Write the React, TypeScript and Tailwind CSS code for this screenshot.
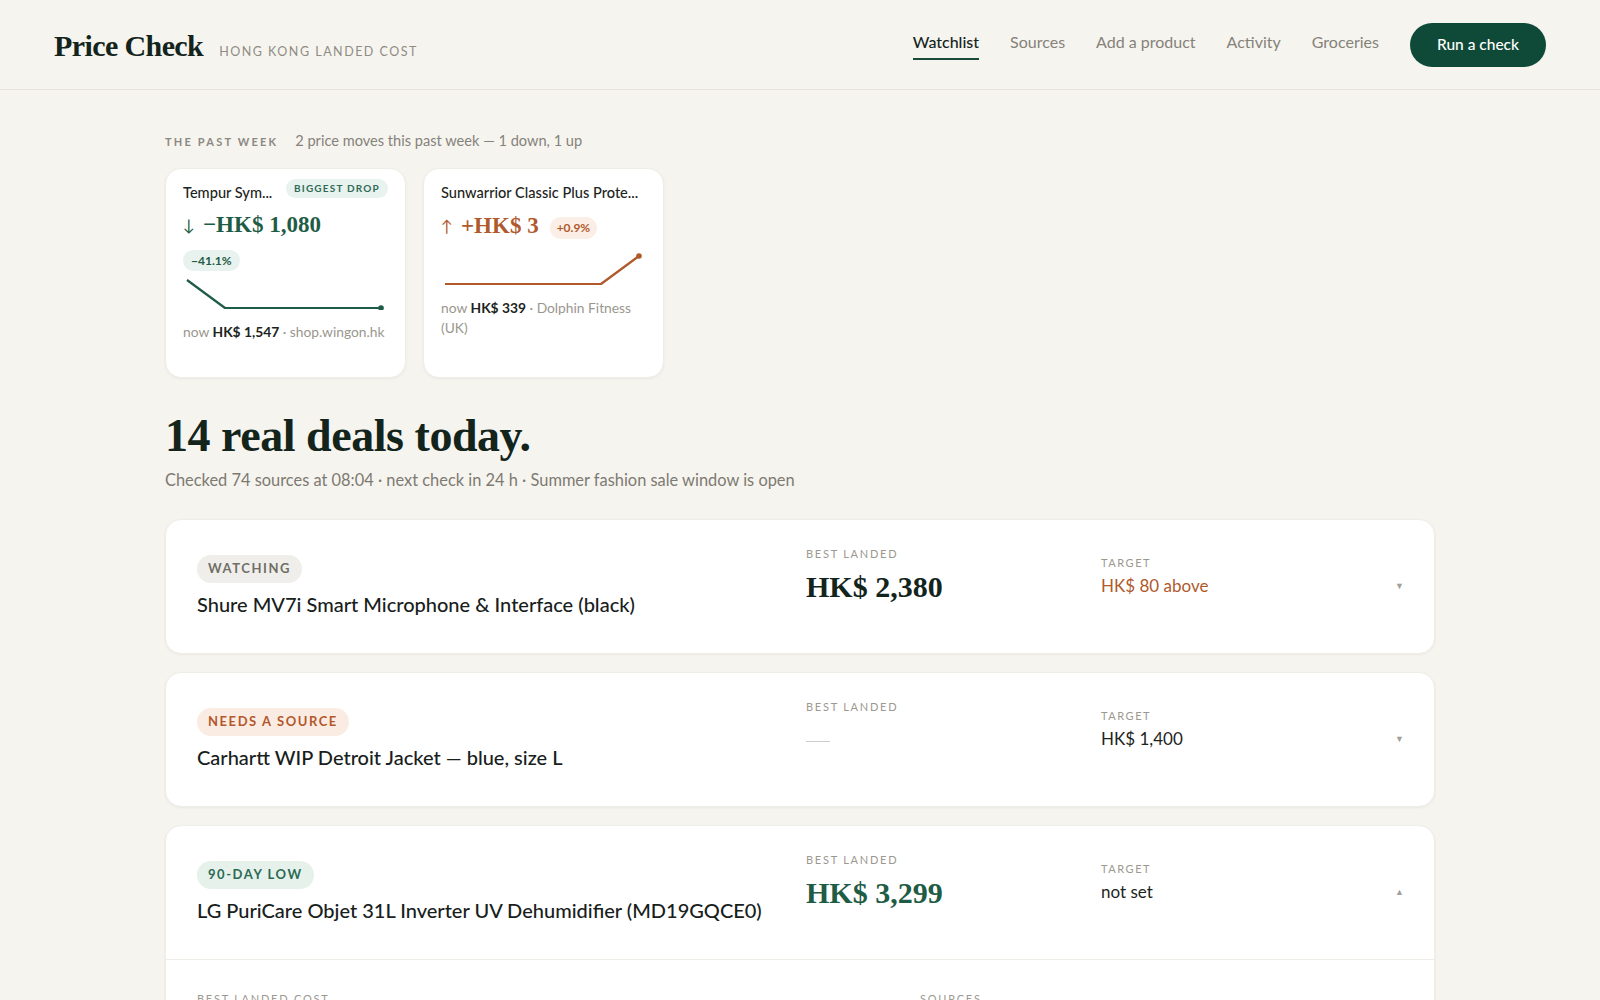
import { useState } from "react";

const serif = "font-['Liberation_Serif',_'DejaVu_Serif',serif]";

type Move = {
  name: string;
  badge?: string;
  dir: "down" | "up";
  amount: string;
  pct: string;
  now: string;
  shop: string;
  points: string;
  dot: [number, number];
};

const moves: Move[] = [
  {
    name: "Tempur Sym...",
    badge: "BIGGEST DROP",
    dir: "down",
    amount: "−HK$ 1,080",
    pct: "−41.1%",
    now: "HK$ 1,547",
    shop: "shop.wingon.hk",
    points: "2,2 40,30 196,30",
    dot: [196, 30],
  },
  {
    name: "Sunwarrior Classic Plus Prote...",
    dir: "up",
    amount: "+HK$ 3",
    pct: "+0.9%",
    now: "HK$ 339",
    shop: "Dolphin Fitness (UK)",
    points: "2,30 158,30 196,2",
    dot: [196, 2],
  },
];

type Deal = {
  tag: string;
  tone: "gray" | "orange" | "green";
  title: string;
  best?: string;
  target: string;
  targetTone?: "orange";
  open?: boolean;
};

const deals: Deal[] = [
  {
    tag: "WATCHING",
    tone: "gray",
    title: "Shure MV7i Smart Microphone & Interface (black)",
    best: "HK$ 2,380",
    target: "HK$ 80 above",
    targetTone: "orange",
  },
  {
    tag: "NEEDS A SOURCE",
    tone: "orange",
    title: "Carhartt WIP Detroit Jacket — blue, size L",
    target: "HK$ 1,400",
  },
  {
    tag: "90-DAY LOW",
    tone: "green",
    title: "LG PuriCare Objet 31L Inverter UV Dehumidifier (MD19GQCE0)",
    best: "HK$ 3,299",
    target: "not set",
    open: true,
  },
];

const tagStyles = {
  gray: "bg-[#efeeea] text-[#6f6e68]",
  orange: "bg-[#fbece3] text-[#b2582c]",
  green: "bg-[#e7f1ec] text-[#2a6a52]",
};

function MoveCard({ m }: { m: Move }) {
  const down = m.dir === "down";
  const color = down ? "#1f5c45" : "#b0592b";
  return (
    <div className="w-[241px] h-[210px] bg-white rounded-2xl shadow-[0_1px_3px_rgba(0,0,0,0.05)] border border-[#efede7] px-[17px] pt-[12px]">
      <div className="flex items-center justify-between gap-[8px] h-[24px]">
        <span className="text-[14.6px] text-[#1d2420] font-medium whitespace-nowrap overflow-hidden">{m.name}</span>
        {m.badge && (
          <span className="shrink-0 whitespace-nowrap text-[10px] font-bold tracking-[0.12em] text-[#2f6b56] bg-[#e8f2ee] rounded-full px-[8px] py-[2px] -mt-[8px]">
            {m.badge}
          </span>
        )}
      </div>
      <div className={`flex items-center gap-[8px] mt-[8px] ${down ? "text-[#1f5c45]" : "text-[#b0592b]"}`}>
        <span className="text-[16px]">{down ? "↓" : "↑"}</span>
        <span className={`${serif} font-bold text-[23px] leading-none`}>{m.amount}</span>
        {!down && (
          <span className="text-[12px] font-bold bg-[#fbeee6] text-[#b0592b] rounded-full px-[7px] py-[2px] ml-[3px] mt-[4px]">
            {m.pct}
          </span>
        )}
      </div>
      {down && (
        <div className="mt-[10px]">
          <span className="text-[12px] font-bold bg-[#e8f2ee] text-[#1f5c45] rounded-full px-[8px] py-[3px]">
            {m.pct}
          </span>
        </div>
      )}
      <svg width="202" height="34" viewBox="-2 -2 202 34" className={down ? "mt-[5px]" : "mt-[13px]"}>
        <polyline points={m.points} fill="none" stroke={color} strokeWidth="2.2" strokeLinejoin="round" />
        <circle cx={m.dot[0]} cy={m.dot[1]} r="2.8" fill={color} />
      </svg>
      <p className="text-[13.8px] text-[#9a978e] leading-[20px] mt-[12px]">
        now <span className="font-bold text-[#1d2420]">{m.now}</span> · {m.shop}
      </p>
    </div>
  );
}

function DealRow({ d }: { d: Deal }) {
  const [open, setOpen] = useState(!!d.open);
  return (
    <div className="bg-white rounded-2xl border border-[#efede7] shadow-[0_1px_3px_rgba(0,0,0,0.05)]">
      <button
        onClick={() => setOpen(!open)}
        className="w-full text-left grid grid-cols-[609px_295px_1fr_20px] items-center pl-[31px] pr-[30px] h-[133px]"
      >
        <div className="mt-[2px]">
          <span className={`inline-block text-[13px] font-bold tracking-[0.12em] rounded-full px-[11px] py-[4px] ${tagStyles[d.tone]}`}>
            {d.tag}
          </span>
          <div className="text-[20px] text-[#17201b] font-medium mt-[6px]">{d.title}</div>
        </div>
        <div className="-mt-[24px]">
          <div className="text-[11px] tracking-[0.16em] text-[#9b9890]">BEST LANDED</div>
          {d.best ? (
            <div className={`${serif} font-bold text-[30px] leading-none mt-[10px] ${d.tone === "green" ? "text-[#1f5c45]" : "text-[#13241c]"}`}>
              {d.best}
            </div>
          ) : (
            <div className="w-[24px] h-[1px] bg-[#cfcdc7] mt-[25px] mb-[13px]" />
          )}
        </div>
        <div className="-mt-[19px]">
          <div className="text-[11px] tracking-[0.14em] text-[#9b9890]">TARGET</div>
          <div className={`text-[17px] mt-[2px] ${d.targetTone === "orange" ? "text-[#b0592b]" : "text-[#1d2420]"}`}>
            {d.target}
          </div>
        </div>
        <span className="text-[9px] text-[#a3a09a] text-right">{open ? "▲" : "▼"}</span>
      </button>
      {open && (
        <div className="border-t border-[#efede7] grid grid-cols-[723px_1fr] pl-[31px] pr-[30px] pt-[31px] pb-[40px]">
          <div className="text-[11px] tracking-[0.16em] text-[#9b9890]">BEST LANDED COST</div>
          <div className="text-[11px] tracking-[0.16em] text-[#9b9890]">SOURCES</div>
        </div>
      )}
    </div>
  );
}

export default function App() {
  const nav = ["Watchlist", "Sources", "Add a product", "Activity", "Groceries"];
  return (
    <div className="min-h-screen bg-[#f6f4ef] font-['Lato',_'Open_Sans',sans-serif] text-[#1d2420]">
      <header className="h-[90px] border-b border-[#e6e3dc] flex items-center justify-between pl-[54px] pr-[54px]">
        <div className="flex items-baseline gap-[16px] mt-[2px]">
          <span className={`${serif} font-bold text-[30px] tracking-[-0.02em] text-[#13241c]`}>Price Check</span>
          <span className="text-[12.5px] tracking-[0.12em] text-[#8f8c84]">HONG KONG LANDED COST</span>
        </div>
        <nav className="flex items-center">
          {nav.map((n, i) => (
            <a
              key={n}
              className={`text-[16px] leading-[24px] mr-[31px] pb-[4px] border-b-2 ${i === 0 ? "text-[#13241c] font-medium border-[#1a4a3a]" : "text-[#85827a] border-transparent"}`}
            >
              {n}
            </a>
          ))}
          <button className="h-[44px] px-[27px] rounded-full bg-[#0f4a38] text-white text-[15.5px] font-medium">
            Run a check
          </button>
        </nav>
      </header>

      <main className="max-w-[1270px] mx-auto pt-[40px] pb-10">
        <div className="flex items-baseline gap-[17px]">
          <span className="text-[11px] font-bold tracking-[0.2em] text-[#8c8982]">THE PAST WEEK</span>
          <span className="text-[14.6px] text-[#85827a]">2 price moves this past week — 1 down, 1 up</span>
        </div>
        <div className="flex gap-[17px] mt-[16px]">
          {moves.map((m) => (
            <MoveCard key={m.name} m={m} />
          ))}
        </div>

        <h1 className={`${serif} font-bold text-[46px] tracking-[-0.01em] text-[#13241c] leading-none mt-[35px]`}>
          14 real deals today.
        </h1>
        <p className="text-[16.4px] text-[#7d7a72] mt-[9px]">
          Checked 74 sources at 08:04 · next check in 24 h · Summer fashion sale window is open
        </p>

        <div className="flex flex-col gap-[18px] mt-[26px]">
          {deals.map((d) => (
            <DealRow key={d.title} d={d} />
          ))}
        </div>
      </main>
    </div>
  );
}
